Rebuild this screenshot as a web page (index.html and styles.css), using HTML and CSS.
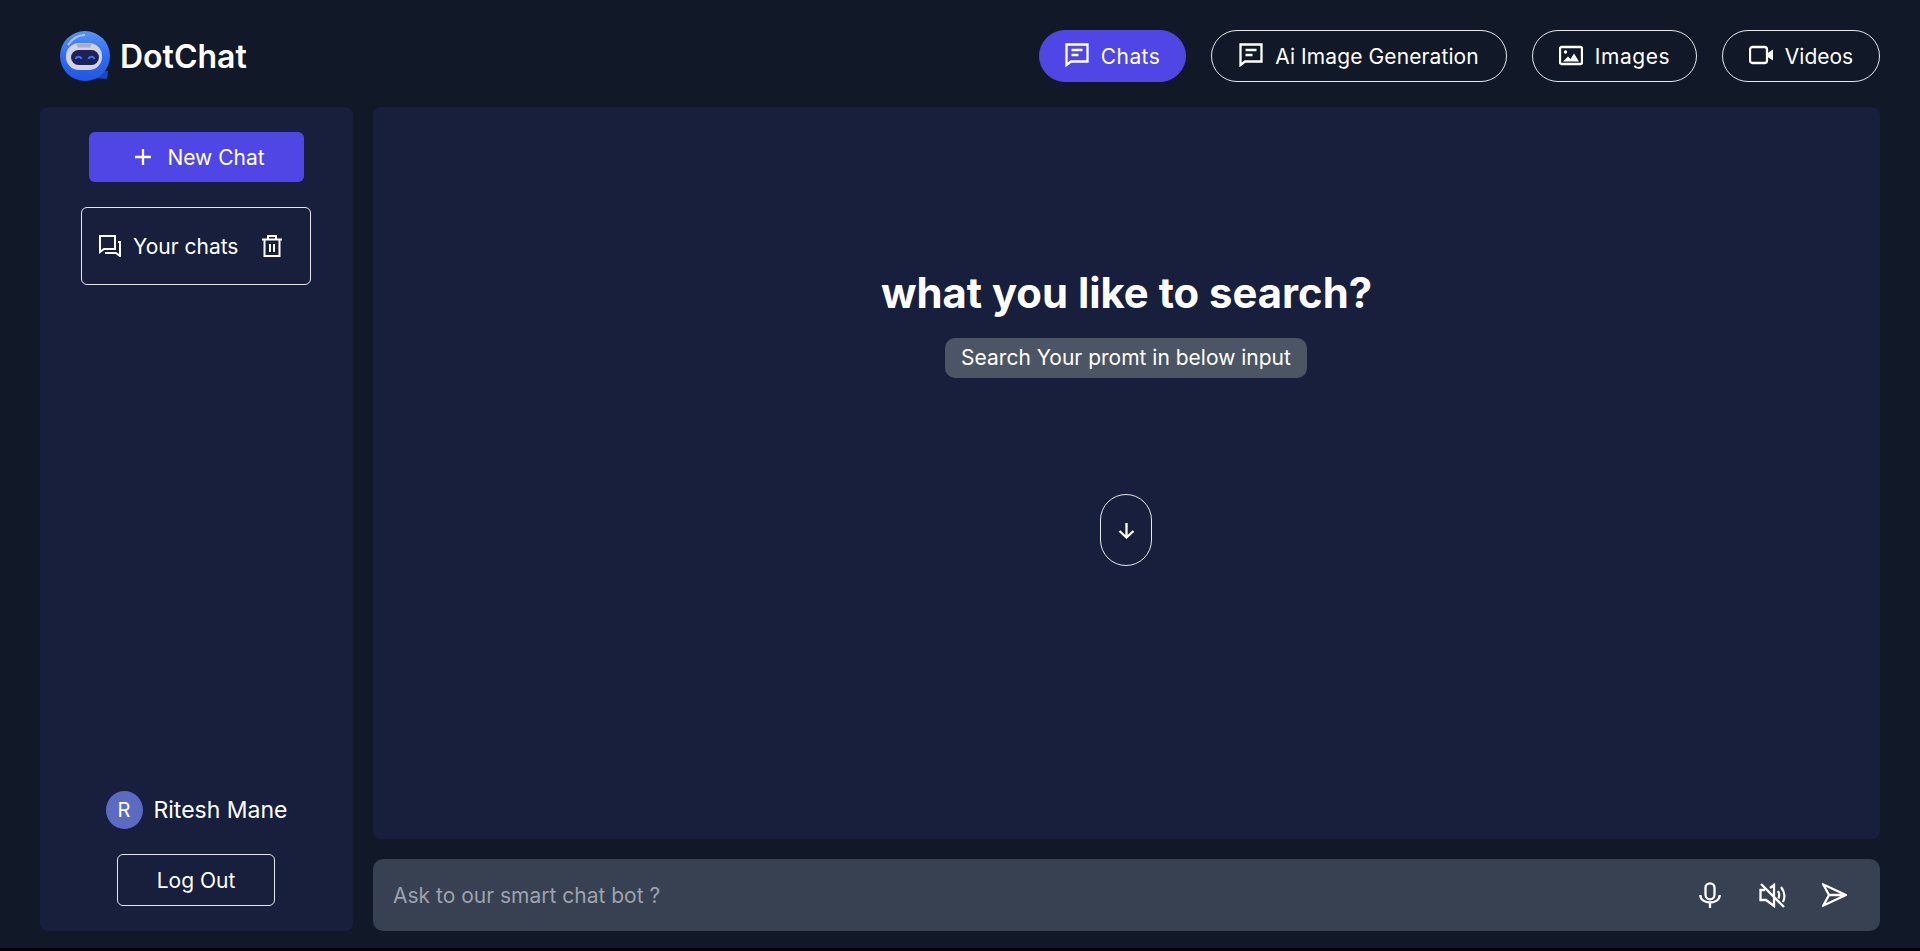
FILE: index.html
```html
<!DOCTYPE html>
<html>
  <head>
    <title>DotChat</title>
    <meta charset="utf-8">
    <meta name="viewport" content="width=device-width, initial-scale=1.0">
    <link rel="stylesheet" href="styles.css">
  </head>
  <body>
    <div class="page">
      <header class="topbar">
        <div class="brand">
          <svg class="brand-logo" viewBox="0 0 50 50">
            <defs>
              <linearGradient id="logoBlue" x1="0" y1="0" x2="0" y2="1">
                <stop offset="0" stop-color="#5a93f6"/>
                <stop offset="0.5" stop-color="#2f6df0"/>
                <stop offset="1" stop-color="#1f57e2"/>
              </linearGradient>
            </defs>
            <path d="M38 40l10 0-1 8-14-1z" fill="#1b46c4"/>
            <circle cx="25" cy="25" r="25" fill="url(#logoBlue)"/>
            <path d="M8 14c4-6 10-10 17-10" stroke="#a5c6fb" stroke-width="2" fill="none"/>
            <rect x="6" y="12" width="36" height="27" rx="13" fill="#d4d2e2"/>
            <path d="M16 12.500h16l-2 4h-12z" fill="#aeacc2"/>
            <rect x="11" y="19" width="28" height="15" rx="7.500" fill="#1c2157"/>
            <path d="M15.500 28c1-3 5-3 6 0M28.500 28c1-3 5-3 6 0" stroke="#3f6ff0" stroke-width="1.800" fill="none"/>
          </svg>
          <span class="brand-name">DotChat</span>
        </div>
        <nav class="nav">
          <a class="nav-pill pill-chats active">
            <svg class="icon bubble" viewBox="0 0 24 24"><path d="M1.500 1.500h21v17H6l-4.500 3.500z M6.500 7h11M6.500 12h7"/></svg>
            Chats
          </a>
          <a class="nav-pill pill-ai">
            <svg class="icon bubble" viewBox="0 0 24 24"><path d="M1.500 1.500h21v17H6l-4.500 3.500z M6.500 7h11M6.500 12h7"/></svg>
            Ai Image Generation
          </a>
          <a class="nav-pill pill-images">
            <svg class="icon" viewBox="0 0 24 24">
              <rect x="1" y="3" width="22" height="17" rx="1.500"/>
              <circle class="solid" cx="6.500" cy="8" r="1.700"/>
              <path class="solid" d="M4 17.500l5-5 2.500 2.500 3.500-5.500 5 8z"/>
            </svg>
            Images
          </a>
          <a class="nav-pill pill-videos">
            <svg class="icon" viewBox="0 0 24 24">
              <rect x="1" y="3" width="17" height="16" rx="2.500"/>
              <path class="solid" d="M18 9.500l6-4v11l-6-4z"/>
            </svg>
            Videos
          </a>
        </nav>
      </header>

      <div class="layout">
        <aside class="sidebar">
          <button class="new-chat">
            <svg class="icon plus" viewBox="0 0 18 18"><path d="M9 1v16M1 9h16"/></svg>
            New Chat
          </button>
          <div class="chat-list">
            <svg class="icon small" viewBox="0 0 22 22"><path d="M1 1h15v13H5l-4 3zM19 7h2v14l-4-3H7v-1"/></svg>
            <span>Your chats</span>
            <svg class="icon small trash" viewBox="0 0 20 22"><path d="M0 4.500h20M6 4.500V1h8v3.500M2.500 4.500V21h15V4.500M8 9v8M12 9v8"/></svg>
          </div>
          <div class="user">
            <span class="avatar">R</span>
            <span>Ritesh Mane</span>
          </div>
          <button class="logout">Log Out</button>
        </aside>

        <div class="content">
          <main class="panel">
            <h1 class="title">what you like to search?</h1>
            <p class="hint">Search Your promt in below input</p>
            <div class="scroll-down">
              <svg class="icon arrow" viewBox="0 0 17 17"><path d="M8.500 1v14.500M1.500 9l7 6.500 7-6.500"/></svg>
            </div>
          </main>
          <div class="prompt">
            <span class="prompt-text">Ask to our smart chat bot ?</span>
            <div class="prompt-actions">
              <svg class="icon tool-mic" viewBox="0 0 22 26">
                <rect x="6.500" y="1.300" width="9" height="16" rx="4.500"/>
                <path d="M1.300 13c0 10 19.400 10 19.400 0M11 21v5"/>
              </svg>
              <svg class="icon tool-mute" viewBox="0 0 27 25">
                <path d="M6 7H1.500v10H7l8 6V2l-4 3M2 1l23 23M19 8c1.500 2.500 1.500 5 .5 7.500M22 4c4 5 4 11 2 15"/>
              </svg>
              <svg class="icon tool-send" viewBox="0 0 25 24">
                <path d="M1.300 1.500L24 12 1.300 22.500 7 12zM7 12h17"/>
              </svg>
            </div>
          </div>
        </div>
      </div>
    </div>
  </body>
</html>
```

FILE: styles.css
```css
html
{
  background: #000;
}
body
{
  margin: 0;
  font-family: Inter, "Liberation Sans", sans-serif;
  color: #fff;
}
.page
{
  height: 948px;
  background: #111827;
  display: flex;
  flex-direction: column;
  padding: 0 40px 17px;
  box-sizing: border-box;
}
.topbar
{
  height: 107px;
  flex: none;
  display: flex;
  justify-content: space-between;
  align-items: flex-start;
  padding-top: 30px;
  box-sizing: border-box;
}
.brand
{
  display: flex;
  align-items: center;
  gap: 10px;
  margin-left: 20px;
  height: 52px;
}
.brand-logo
{
  width: 50px;
  height: 50px;
}
.brand-name
{
  font-size: 32px;
  font-weight: 600;
}
.nav
{
  display: flex;
  gap: 25px;
}
.nav-pill
{
  height: 52px;
  box-sizing: border-box;
  display: flex;
  align-items: center;
  justify-content: center;
  gap: 12px;
  border: 1px solid #e5e7eb;
  border-radius: 26px;
  font-size: 21px;
}
.nav-pill.active
{
  background: #4f46e5;
  border-color: #4f46e5;
}
.pill-chats
{
  width: 147px;
  letter-spacing: 0.4px;
}
.pill-ai
{
  width: 296px;
  letter-spacing: 0.1px;
}
.pill-images
{
  width: 165px;
  letter-spacing: 0.6px;
}
.pill-videos
{
  width: 158px;
}
.icon
{
  width: 24px;
  height: 24px;
  fill: none;
  stroke: #fff;
  stroke-width: 2.3;
  flex: none;
}
.icon .solid
{
  fill: #fff;
  stroke: none;
}
.icon.bubble
{
  margin-bottom: 3px;
}
.layout
{
  flex: 1;
  display: flex;
  gap: 20px;
  min-height: 0;
}
.sidebar
{
  width: 313px;
  flex: none;
  background: #171f3d;
  border-radius: 8px;
  display: flex;
  flex-direction: column;
  align-items: center;
  padding: 25px 0;
  box-sizing: border-box;
}
.new-chat
{
  width: 215px;
  height: 50px;
  padding: 0 0 0 6px;
  background: #4f46e5;
  border: none;
  border-radius: 6px;
  color: #fff;
  font: inherit;
  font-size: 21px;
  display: flex;
  align-items: center;
  justify-content: center;
  gap: 15px;
}
.icon.plus
{
  width: 18px;
  height: 18px;
}
.chat-list
{
  width: 230px;
  height: 78px;
  margin: 25px 1px 0 0;
  border: 1px solid #e5e7eb;
  border-radius: 6px;
  box-sizing: border-box;
  display: flex;
  align-items: center;
  padding-left: 17px;
  font-size: 21px;
}
.icon.small
{
  width: 22px;
  height: 22px;
  stroke-width: 2;
}
.chat-list span
{
  margin: 0 23px 0 12px;
}
.user
{
  margin-top: auto;
  display: flex;
  align-items: center;
  gap: 11px;
  font-size: 23px;
}
.avatar
{
  width: 37px;
  height: 38px;
  border-radius: 50%;
  background: #5c6bc0;
  display: flex;
  align-items: center;
  justify-content: center;
  font-size: 20px;
}
.logout
{
  width: 158px;
  height: 52px;
  margin: 25px 1px 0 0;
  background: none;
  border: 1px solid #e5e7eb;
  border-radius: 6px;
  color: #fff;
  font: inherit;
  font-size: 21px;
}
.content
{
  flex: 1;
  display: flex;
  flex-direction: column;
  gap: 20px;
  min-width: 0;
}
.panel
{
  flex: 1;
  background: #171f3d;
  border-radius: 8px;
  display: flex;
  flex-direction: column;
  align-items: center;
  padding-top: 160px;
}
.title
{
  margin: 0;
  font-size: 41.800px;
  line-height: 52px;
  font-weight: 650;
}
.hint
{
  margin: 19px 1px 0 0;
  height: 40px;
  width: 362px;
  box-sizing: border-box;
  background: #4b5563;
  border-radius: 10px;
  font-size: 21px;
  line-height: 40px;
  text-align: center;
  white-space: nowrap;
}
.scroll-down
{
  width: 52px;
  height: 72px;
  margin: 116px 1px 0 0;
  box-sizing: border-box;
  border: 1px solid #e5e7eb;
  border-radius: 26px;
  display: flex;
  align-items: center;
  justify-content: center;
}
.icon.arrow
{
  width: 17px;
  height: 17px;
}
.prompt
{
  height: 72px;
  flex: none;
  background: #374151;
  border-radius: 10px;
  display: flex;
  align-items: center;
  justify-content: space-between;
  padding: 0 33px 0 20px;
}
.prompt-text
{
  color: #9ca3af;
  font-size: 21px;
}
.prompt-actions
{
  display: flex;
  align-items: center;
  gap: 36px;
}
.tool-mic
{
  width: 22px;
  height: 26px;
  margin-right: 2px;
}
.tool-mute
{
  width: 27px;
  height: 25px;
}
.tool-send
{
  width: 25px;
  height: 24px;
}
```
